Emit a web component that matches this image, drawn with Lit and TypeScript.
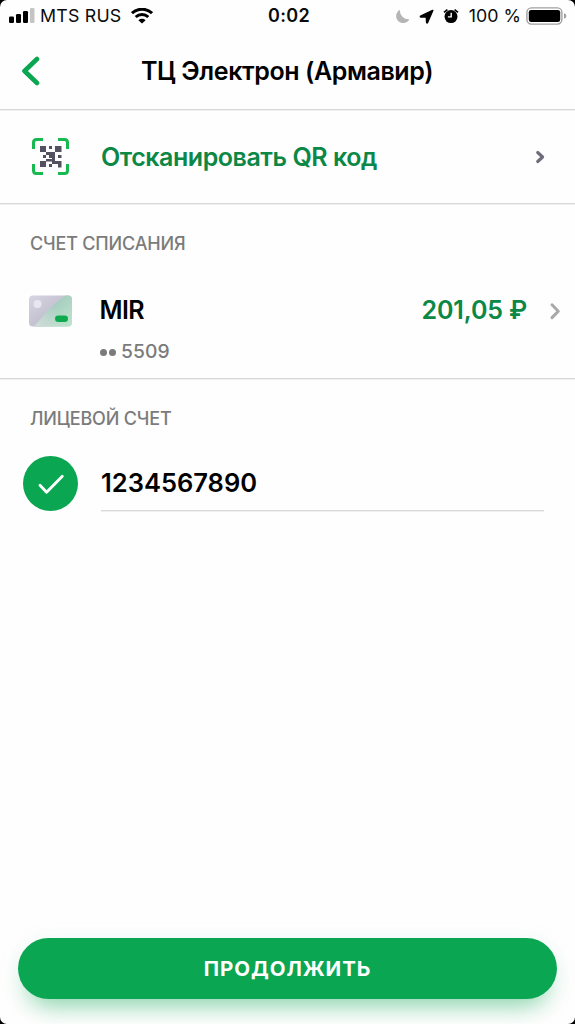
import { LitElement, html, css } from "lit";
import { customElement } from "lit/decorators.js";

@customElement("status-bar")
class StatusBar extends LitElement {
  static styles = css`
    :host { display: grid; grid-template-columns: 1fr auto 1fr; align-items: center; height: 32px; font-size: 17.8px; line-height: 32px; color: #0b0b0b; }
    .left, .right { display: flex; align-items: center; }
    .left { padding-left: 9px; }
    .right { justify-content: flex-end; padding-right: 8px; }
    .carrier { margin-left: 5px; letter-spacing: 0.2px; }
    .time { font-weight: 600; font-size: 18px; letter-spacing: 0.3px; padding-left: 3px; }
    .wifi { margin-left: 10px; }
    .arrow { margin-left: 9px; }
    .alarm { margin-left: 9px; }
    .pct { margin: 0 5px 0 10px; letter-spacing: 0; }
    svg { display: block; }
  `;
  render() {
    return html`
      <div class="left">
        <svg width="26" height="16" viewBox="0 0 26 16">
          <rect x="0" y="8.5" width="5" height="6.5" rx="1.3"/><rect x="7" y="6" width="5" height="9" rx="1.3"/>
          <rect x="14" y="3" width="5" height="12" rx="1.3"/><rect x="21" y="0" width="4.5" height="15" rx="1.3" fill="#c4c4c4"/>
        </svg>
        <span class="carrier">MTS RUS</span>
        <svg class="wifi" width="22" height="16" viewBox="0 0 22 16" fill="none" stroke="#000" stroke-width="3">
          <path d="M1 5.2a14.5 14.500 0 0 1 20 0M4.7 9a9.2 9.200 0 0 1 12.600 0"/>
          <path d="M11 15.600 7.400 12.300a5.200 5.200 0 0 1 7.200 0z" fill="#000" stroke="none"/>
        </svg>
      </div>
      <div class="time">0:02</div>
      <div class="right">
        <svg width="15" height="15" viewBox="0 0 15 15"><path d="M5 .8a8.500 8.500 0 0 0 9.400 9.400A7 7 0 1 1 5 .8z" fill="#b5b5b5"/></svg>
        <svg class="arrow" width="15" height="15" viewBox="0 0 15 15"><path d="M13.700 1.500 1.600 7.300q-.5.500.3.600l5.500.1.300 5.400q.3.800.8.100z" stroke="#000" stroke-width="1.600" stroke-linejoin="round"/></svg>
        <svg class="alarm" width="16" height="16" viewBox="0 0 16 16" fill="none" stroke="#000">
          <circle cx="8" cy="8.600" r="6.500" fill="#000" stroke="none"/>
          <path d="M1 4.300 4.400 1.600M15 4.300 11.600 1.600" stroke-width="1.700"/>
          <path d="M8.200 4.800v4.100H4.900" stroke="#fff" stroke-width="1.400"/>
        </svg>
        <span class="pct">100 %</span>
        <svg width="41" height="18" viewBox="0 0 41 18">
          <rect x=".9" y=".9" width="35" height="16.200" rx="4.500" fill="#fff" stroke="#a0a0a0" stroke-width="1.400"/>
          <rect x="2.800" y="2.900" width="31.400" height="12.200" rx="2.400"/>
          <path d="M38 6.200q2.400.800 2.400 2.800T38 11.800z" fill="#a0a0a0"/>
        </svg>
      </div>`;
  }
}

@customElement("app-root")
class AppRoot extends LitElement {
  static styles = css`
    :host { display: block; height: 1024px; background: #000; font-family: Inter, "Liberation Sans", sans-serif; color: #000; }
    * { box-sizing: border-box; }
    svg { display: block; flex: none; }
    .screen { display: flex; flex-direction: column; height: 100%; background: #fefefe; border-radius: 7px; overflow: hidden; }
    .header, .scan, .account { border-bottom: 1px solid #d9d9d9; box-shadow: 0 1px #f0f0f0; }
    .header { display: grid; grid-template-columns: 48px 1fr 49px; align-items: center; height: 78px; font-size: 25px; font-weight: 600; text-align: center; white-space: nowrap; }
    .back { margin-left: 21px; }
    .title { letter-spacing: -0.4px; }
    .scan { display: flex; align-items: center; height: 94px; padding: 0 29px 0 31px; }
    .scan-label { flex: 1; margin-left: 31px; color: #0b8746; font-size: 25px; font-weight: 600; letter-spacing: -0.45px; white-space: nowrap; }
    .account { height: 175px; padding-top: 29px; }
    .caption { margin-left: 30px; font-size: 18px; line-height: 22px; font-weight: 500; letter-spacing: -0.18px; color: #7b7b7b; white-space: nowrap; }
    .card-row { display: flex; align-items: center; height: 32px; margin-top: 40px; padding: 0 14px 0 28px; font-size: 25px; line-height: 30px; font-weight: 600; }
    .card-name { flex: 1; margin: 0 0 2px 27.5px; letter-spacing: -0.6px; }
    .amount { color: #0b8746; letter-spacing: -0.15px; margin: 0 22px 2px 0; }
    .mask { display: flex; align-items: center; gap: 2px; margin: 12px 0 0 100px; font-size: 19.3px; line-height: 24px; font-weight: 500; color: #7b7b7b; }
    .dot { width: 7px; height: 7px; margin-top: 2px; border-radius: 50%; background: #7b7b7b; }
    .digits { margin-left: 3px; letter-spacing: 0.1px; }
    .personal { padding-top: 29px; flex: 1; }
    .field-row { display: flex; margin: 26px 31px 0 23px; height: 55px; }
    .check { display: flex; align-items: center; justify-content: center; width: 55px; height: 55px; border-radius: 50%; background: #0ba652; }
    .field { flex: 1; margin-left: 23px; border-bottom: 1px solid #d9d9d9; box-shadow: 0 1px #f0f0f0; font-size: 25.5px; font-weight: 600; line-height: 54px; }
    .button { display: flex; align-items: center; justify-content: center; height: 61px; margin: 0 18px 25px; border-radius: 31px; background: #0ba652; box-shadow: 0 18px 24px -12px rgba(11,166,82,.45), 0 4px 24px rgba(11,166,82,.09); color: #fff; font-size: 20.5px; font-weight: 650; letter-spacing: 0.95px; }
  `;
  render() {
    return html`
      <div class="screen">
        <status-bar></status-bar>
        <div class="header">
          <svg class="back" width="20" height="30" viewBox="0 0 20 30" fill="none" stroke="#0ba652" stroke-width="4.600" stroke-linecap="round" stroke-linejoin="round"><path d="M16 3 3.500 15 16 27"/></svg>
          <div class="title">ТЦ Электрон (Армавир)</div>
        </div>
        <div class="scan">
          <svg width="39" height="39" viewBox="0 0 39 39">
            <path d="M2.500 12V5.500q0-3 3-3H12M27 2.500h6.500q3 0 3 3V12M36.500 27v6.500q0 3-3 3H27M12 36.500H5.500q-3 0-3-3V27" fill="none" stroke="#18b950" stroke-width="3"/>
            <path fill="#53515f" d="M9 9h6v6H9zM18 9h3v3h-3zM24 9h6.500v6H24zM15 15h9v12h-3v-2.500h-6V22h6v-1h-3v-3h-3zM12 18h3v3h-3zM27 18h3.500v3H27zM9 24h6v6H9zM21 24h9.500v6.500H27V27h-6zM18 27h3v3h-3z"/>
          </svg>
          <div class="scan-label">Отсканировать QR код</div>
          <svg width="12" height="14" viewBox="0 0 12 14" fill="none" stroke="#6d6d7b" stroke-width="3.100" stroke-linecap="round" stroke-linejoin="round"><path d="m3.700 2.500 4.900 4.500-4.900 4.500"/></svg>
        </div>
        <div class="account">
          <div class="caption">СЧЕТ СПИСАНИЯ</div>
          <div class="card-row">
            <svg width="44" height="32" viewBox="0 0 44 32">
              <defs>
                <linearGradient id="a" x1="0" y1="0" x2="1" y2="1"><stop stop-color="#d8d6e4"/><stop offset=".5" stop-color="#c5c3d2"/><stop offset="1" stop-color="#c8dcd3"/></linearGradient>
                <linearGradient id="b" x1=".3" y1=".3" x2="1" y2="1"><stop stop-color="#a3c9bf"/><stop offset="1" stop-color="#c0e6cd"/></linearGradient>
                <linearGradient id="d" gradientUnits="userSpaceOnUse" x1="8" y1="32" x2="30" y2="18"><stop stop-color="#d3dcda"/><stop offset="1" stop-color="#d3dcda" stop-opacity="0"/></linearGradient>
                <clipPath id="c"><rect x="1" y=".5" width="43" height="31" rx="4"/></clipPath>
              </defs>
              <g clip-path="url(#c)"><rect width="44" height="32" fill="url(#a)"/><path d="M44 0h-6Q25 9 16 20L6 32h38z" fill="url(#b)"/><path d="M44 0h-6Q25 9 16 20L6 32h38z" fill="url(#d)"/></g>
              <circle cx="9.500" cy="9" r="4" fill="#e8e6ee"/><rect x="27" y="20.500" width="13" height="6.500" rx="3.250" fill="#0eaa50"/>
            </svg>
            <div class="card-name">MIR</div>
            <div class="amount">201,05 ₽</div>
            <svg width="12" height="18" viewBox="0 0 12 18" fill="none" stroke="#a9a9a9" stroke-width="3" stroke-linecap="round" stroke-linejoin="round"><path d="m3 2.800 6.300 6.400L3 15.600"/></svg>
          </div>
          <div class="mask"><i class="dot"></i><i class="dot"></i><span class="digits">5509</span></div>
        </div>
        <div class="personal">
          <div class="caption">ЛИЦЕВОЙ СЧЕТ</div>
          <div class="field-row">
            <div class="check"><svg width="28" height="22" viewBox="0 0 28 22" fill="none" stroke="#fff" stroke-width="2.800" stroke-linecap="round" stroke-linejoin="round"><path d="m3 12.300 6.600 7L25.300 3.300"/></svg></div>
            <div class="field">1234567890</div>
          </div>
        </div>
        <div class="button">ПРОДОЛЖИТЬ</div>
      </div>`;
  }
}
